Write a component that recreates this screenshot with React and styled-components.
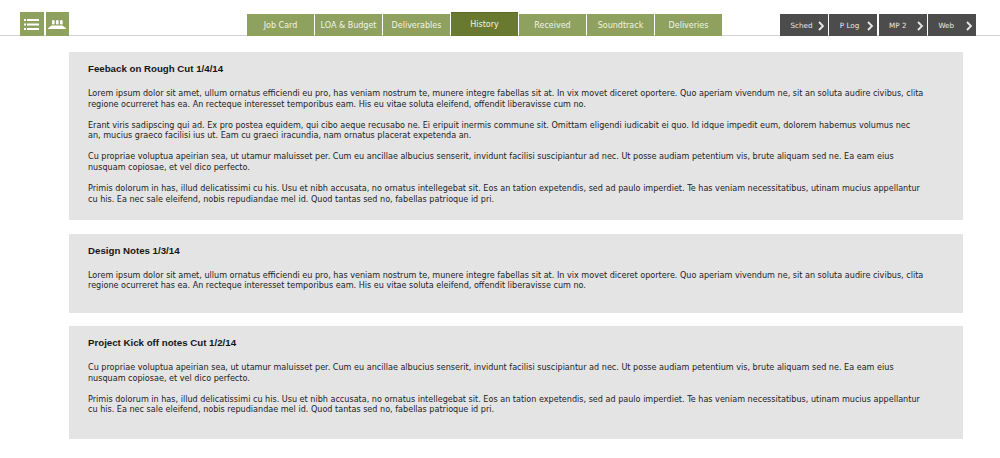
import React from "react";
import styled, { createGlobalStyle } from "styled-components";

const Global = createGlobalStyle`
  html, body { margin: 0; padding: 0; background: #fff; }
  body { font-family: "DejaVu Sans", Verdana, sans-serif; }
`;
const Page = styled.div`width: 1000px; height: 458px; overflow: hidden; background: #fff;`;
const Header = styled.header`
  height: 36px; box-sizing: border-box; border-bottom: 1px solid #d2d2d2;
`;
const Bar = styled.div`display: flex; align-items: flex-end; height: 36px;`;
const IconGroup = styled.div`display: flex; gap: 2px; margin-left: 20px; width: 227px;`;
const IconButton = styled.button`
  width: 23.5px; height: 24px; padding: 0; border: 0; background: #8fa15f;
  display: flex; align-items: center; justify-content: center;
`;
const Tabs = styled.nav`display: flex; align-items: flex-end; gap: 1px; width: 533px;`;
const Tab = styled.div`
  width: 67px; height: ${p => (p.$active ? "24px" : "22px")};
  background: ${p => (p.$active ? "#69792f" : "#8fa15f")};
  color: #f1f4e6; font-size: 8px; font-family: "DejaVu Sans", sans-serif;
  display: flex; align-items: center; justify-content: center; white-space: nowrap;
  border-top: ${p => (p.$active ? "1px solid #5a6828" : "0")}; box-sizing: border-box;
`;
const Links = styled.nav`display: flex; gap: 1.3px;`;
const LinkTab = styled.div`
  width: 48px; height: 22px; background: #4c4c4c; color: #e8e8e8; font-size: 7.2px;
  display: flex; align-items: center; justify-content: space-between; box-sizing: border-box;
  padding: 1px 3px 0 10.5px; white-space: nowrap;
`;
const Content = styled.main`
  display: flex; flex-direction: column; gap: 13.5px; margin: 16px 37px 0 69px;
`;
const Card = styled.section`
  background: #e4e4e4; box-sizing: border-box; height: ${p => p.$h}px; padding: 11px 19px 0;
`;
const Title = styled.h2`
  margin: 0 0 14px; font: bold 9.7px/11px "Liberation Sans", Arial, sans-serif; color: #161616;
`;
const Para = styled.p`
  margin: 0 0 10.5px; font-size: 8.08px; line-height: 10.6px; color: #222;
`;

const P1 = <>Lorem ipsum dolor sit amet, ullum ornatus efficiendi eu pro, has veniam nostrum te, munere integre fabellas sit at. In vix movet diceret oportere. Quo aperiam vivendum ne, sit an soluta audire civibus, clita<br />regione ocurreret has ea. An recteque interesset temporibus eam. His eu vitae soluta eleifend, offendit liberavisse cum no.</>;
const P2 = <>Erant viris sadipscing qui ad. Ex pro postea equidem, qui cibo aeque recusabo ne. Ei eripuit inermis commune sit. Omittam eligendi iudicabit ei quo. Id idque impedit eum, dolorem habemus volumus nec<br />an, mucius graeco facilisi ius ut. Eam cu graeci iracundia, nam ornatus placerat expetenda an.</>;
const P3 = <>Cu propriae voluptua apeirian sea, ut utamur maluisset per. Cum eu ancillae albucius senserit, invidunt facilisi suscipiantur ad nec. Ut posse audiam petentium vis, brute aliquam sed ne. Ea eam eius<br />nusquam copiosae, et vel dico perfecto.</>;
const P4 = <>Primis dolorum in has, illud delicatissimi cu his. Usu et nibh accusata, no ornatus intellegebat sit. Eos an tation expetendis, sed ad paulo imperdiet. Te has veniam necessitatibus, utinam mucius appellantur<br />cu his. Ea nec sale eleifend, nobis repudiandae mel id. Quod tantas sed no, fabellas patrioque id pri.</>;

const ListIcon = () => (
  <svg width="15" height="13" viewBox="0 0 15 13" fill="#fff">
    <rect x="0" y="1" width="2" height="2" /><rect x="3" y="1" width="12" height="2" />
    <rect x="0" y="5.5" width="2" height="2" /><rect x="3" y="5.5" width="12" height="2" />
    <rect x="0" y="10" width="2" height="2" /><rect x="3" y="10" width="12" height="2" />
  </svg>
);
const PeopleIcon = () => (
  <svg width="18" height="9" viewBox="0 0 18 9" fill="#fff">
    <rect x="4" y="0" width="2.6" height="4.5" rx="1.2" /><rect x="8" y="0" width="2.6" height="4.5" rx="1.2" /><rect x="12" y="0" width="2.6" height="4.5" rx="1.2" />
    <path d="M0 8.2 L3.5 5.5 H14.5 L18 8.2 V9 H0 Z" />
  </svg>
);
const Chevron = () => (
  <svg width="8" height="10" viewBox="0 0 8 10" fill="none" stroke="#e8e8e8" strokeWidth="1.8">
    <path d="M2 1 L6 5 L2 9" />
  </svg>
);

const tabs = ["Job Card", "LOA & Budget", "Deliverables", "History", "Received", "Soundtrack", "Deliveries"];
const links = ["Sched", "P Log", "MP 2", "Web"];

export default function App() {
  return (
    <Page>
      <Global />
      <Header>
        <Bar>
          <IconGroup>
            <IconButton><ListIcon /></IconButton>
            <IconButton><PeopleIcon /></IconButton>
          </IconGroup>
          <Tabs>
            {tabs.map(t => <Tab key={t} $active={t === "History"}>{t}</Tab>)}
          </Tabs>
          <Links>
            {links.map(l => <LinkTab key={l}><span>{l}</span><Chevron /></LinkTab>)}
          </Links>
        </Bar>
      </Header>
      <Content>
        <Card $h={168}>
          <Title>Feeback on Rough Cut 1/4/14</Title>
          <Para>{P1}</Para><Para>{P2}</Para><Para>{P3}</Para><Para>{P4}</Para>
        </Card>
        <Card $h={79}>
          <Title>Design Notes 1/3/14</Title>
          <Para>{P1}</Para>
        </Card>
        <Card $h={113}>
          <Title>Project Kick off notes Cut 1/2/14</Title>
          <Para>{P3}</Para><Para>{P4}</Para>
        </Card>
      </Content>
    </Page>
  );
}
